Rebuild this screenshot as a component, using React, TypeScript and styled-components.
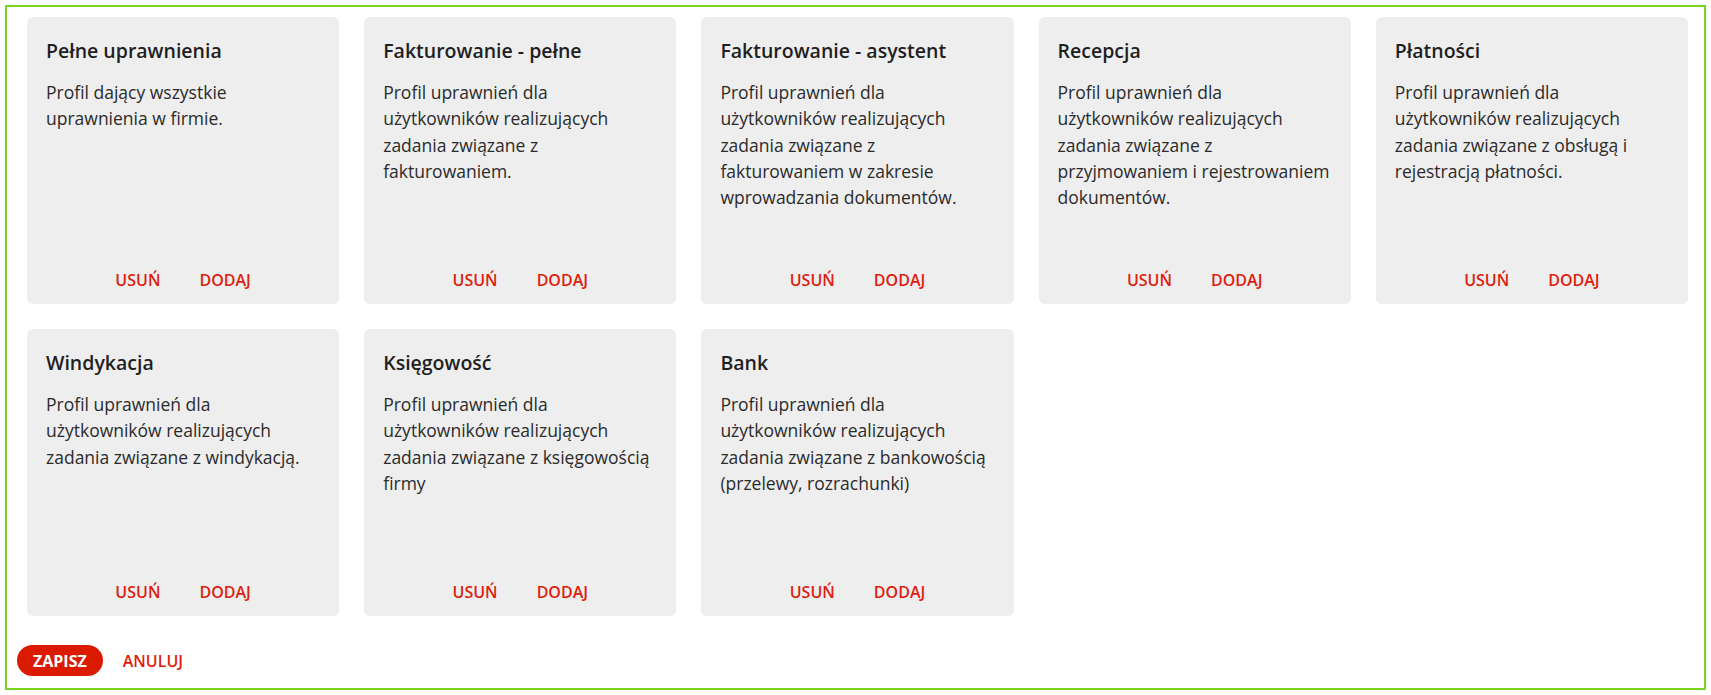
import React from "react";
import styled, { createGlobalStyle } from "styled-components";

const GlobalStyle = createGlobalStyle`
  * { box-sizing: border-box; }
  html, body { margin: 0; padding: 0; background: #ffffff; }
  body { font-family: "Open Sans", "Noto Sans", sans-serif; }
`;

const Page = styled.div`
  padding: 5px;
`;

const Frame = styled.div`
  border: 2px solid #7ed321;
  padding: 10px 16px 12px 10px;
  display: flex;
  flex-direction: column;
`;

const Grid = styled.div`
  display: grid;
  grid-template-columns: repeat(5, 1fr);
  column-gap: 25px;
  row-gap: 25px;
  padding-left: 10px;
`;

const Card = styled.div`
  background: #eeeeee;
  border-radius: 6px;
  height: 287px;
  padding: 19px 19px 6px 19px;
  display: flex;
  flex-direction: column;
`;

const Title = styled.h3`
  margin: 0 0 13px 0;
  font-size: 19.5px;
  line-height: 30px;
  font-weight: 600;
  color: #1f1f1f;
`;

const Description = styled.p`
  margin: 0;
  font-size: 17.5px;
  line-height: 26.25px;
  font-weight: 400;
  color: #2b2b2b;
`;

const Actions = styled.div`
  margin-top: auto;
  display: flex;
  justify-content: center;
  gap: 23px;
`;

const TextButton = styled.button`
  background: none;
  border: none;
  padding: 0 8px;
  height: 36px;
  font-family: inherit;
  font-size: 16px;
  font-weight: 600;
  text-transform: uppercase;
  color: #df1d0e;
  cursor: pointer;
`;

const Footer = styled.div`
  margin-top: 29px;
  display: flex;
  align-items: center;
  gap: 12px;
`;

const PrimaryButton = styled.button<{ $filled?: boolean }>`
  height: 31px;
  padding: 0 ${(p) => (p.$filled ? "16px" : "8px")};
  border: none;
  border-radius: 16px;
  background: ${(p) => (p.$filled ? "#db1a02" : "transparent")};
  color: ${(p) => (p.$filled ? "#ffffff" : "#df1d0e")};
  font-family: inherit;
  font-size: 16px;
  font-weight: ${(p) => (p.$filled ? 700 : 600)};
  text-transform: uppercase;
  cursor: pointer;
`;

const profiles = [
  { title: "Pełne uprawnienia", desc: "Profil dający wszystkie uprawnienia w firmie." },
  { title: "Fakturowanie - pełne", desc: "Profil uprawnień dla użytkowników realizujących zadania związane z fakturowaniem." },
  { title: "Fakturowanie - asystent", desc: "Profil uprawnień dla użytkowników realizujących zadania związane z fakturowaniem w zakresie wprowadzania dokumentów." },
  { title: "Recepcja", desc: "Profil uprawnień dla użytkowników realizujących zadania związane z przyjmowaniem i rejestrowaniem dokumentów." },
  { title: "Płatności", desc: "Profil uprawnień dla użytkowników realizujących zadania związane z obsługą i rejestracją płatności." },
  { title: "Windykacja", desc: "Profil uprawnień dla użytkowników realizujących zadania związane z windykacją." },
  { title: "Księgowość", desc: "Profil uprawnień dla użytkowników realizujących zadania związane z księgowością firmy" },
  { title: "Bank", desc: "Profil uprawnień dla użytkowników realizujących zadania związane z bankowością (przelewy, rozrachunki)" },
];

export default function App() {
  return (
    <>
      <GlobalStyle />
      <Page>
        <Frame>
          <Grid>
            {profiles.map((p) => (
              <Card key={p.title}>
                <Title>{p.title}</Title>
                <Description>{p.desc}</Description>
                <Actions>
                  <TextButton>Usuń</TextButton>
                  <TextButton>Dodaj</TextButton>
                </Actions>
              </Card>
            ))}
          </Grid>
          <Footer>
            <PrimaryButton $filled>Zapisz</PrimaryButton>
            <PrimaryButton>Anuluj</PrimaryButton>
          </Footer>
        </Frame>
      </Page>
    </>
  );
}
